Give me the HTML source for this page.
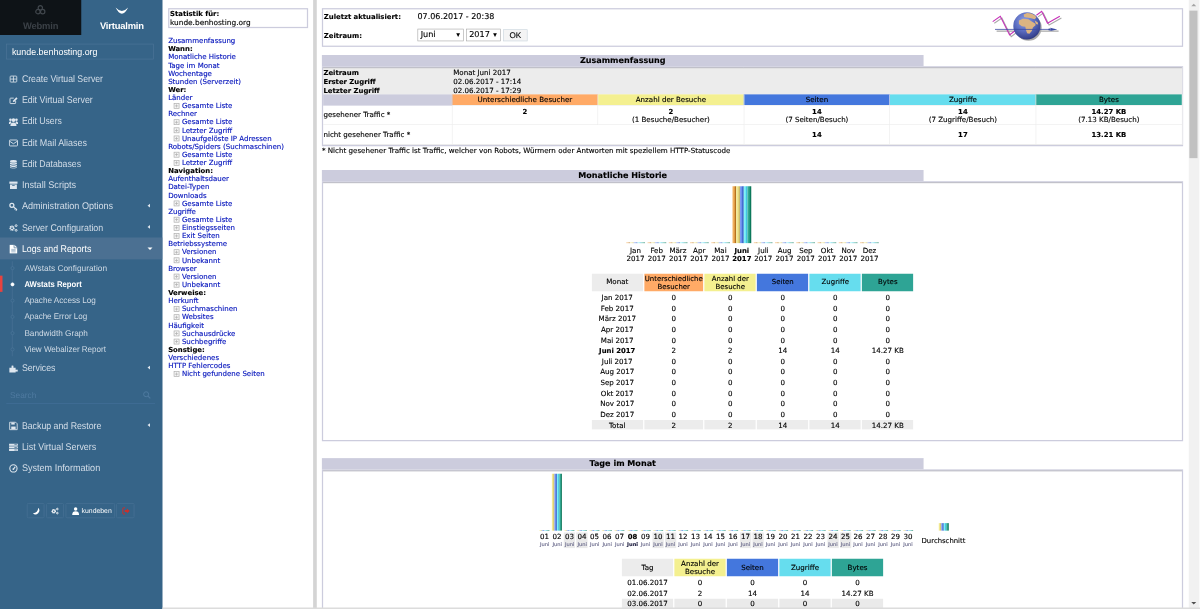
<!DOCTYPE html>
<html lang="de"><head><meta charset="utf-8"><title>AWstats Report - kunde.benhosting.org</title>
<style>
*{box-sizing:content-box}
html,body{margin:0;padding:0;background:#fff;overflow:hidden;width:1200px;height:609px}
#stage{position:absolute;left:0;top:0;width:1920px;height:975px;transform:scale(0.625);transform-origin:0 0;overflow:hidden;background:#fff;text-rendering:geometricPrecision}
/* ---------- sidebar ---------- */
#side{position:absolute;left:0;top:0;width:260px;height:975px;background:#366488;font-family:"Liberation Sans",sans-serif;color:#e4ebf2;overflow:hidden}
#tabW{position:absolute;left:0;top:0;width:130px;height:56px;background:#0e1317;color:#3b4147}
#tabV{position:absolute;left:130px;top:0;width:130px;height:56px;color:#fff}
.tablbl{position:absolute;left:0;width:130px;top:33px;text-align:center;font-weight:bold;font-size:15px;line-height:18px;letter-spacing:-0.3px}
.tabico{position:absolute;left:0;width:130px;top:6px;text-align:center;height:22px}
#dom{position:absolute;left:10px;top:70px;width:234px;height:23px;border:1px solid #4d7598;color:#fff;font-size:15px;line-height:23px}
#dom span{position:absolute;left:8px;top:1px;transform:scaleX(.95);transform-origin:0 50%}
.mi{position:absolute;left:0;width:260px;height:34px;line-height:38px;font-size:15.6px;color:#d3dde8;white-space:nowrap}
.mi .tx{position:absolute;left:35px;top:0;transform:scaleX(.92);transform-origin:0 50%}
.mi svg{position:absolute;left:13.5px;top:10.5px;width:15px;height:15px}
.mi .ar{position:absolute;left:236px;top:14px;width:0;height:0;border-top:3.5px solid transparent;border-bottom:3.5px solid transparent;border-right:4px solid #dfe7ef}
.mi .ad{position:absolute;left:235.500px;top:16px;width:0;height:0;border-left:4px solid transparent;border-right:4px solid transparent;border-top:4.500px solid #fff}
.mi.act{background:#4b7092;color:#fff;height:35px}
.si{position:absolute;left:0;width:260px;height:26px;line-height:26px;font-size:13.4px;color:#cfdae5;white-space:nowrap}
.si .tx{position:absolute;left:39px;top:0;transform:scaleX(.985);transform-origin:0 50%}
.si.on .tx{transform:scaleX(.94)}
.si .bu{position:absolute;left:17px;top:10px;width:4px;height:4px;border:1px solid #4f789c;border-radius:50%;background:#366488}
.si.on{color:#fff;font-weight:bold}
.si.on .bu{background:#fff;border-color:#fff}
#vline{position:absolute;left:19px;top:418px;width:1px;height:152px;background:#4a7295}
#redbar{position:absolute;left:0;top:441px;width:4px;height:26px;background:#e8433f}
#search{position:absolute;left:10px;top:621px;width:238px;height:24px;border-bottom:1px solid #44709a;font-size:13.3px;line-height:24px;color:#4f7aa0}
#search span{position:absolute;left:6px;top:0}
.bb{position:absolute;top:805px;height:22px;border:1px solid #4a7397;border-radius:2px;color:#fff;font-size:11px;line-height:22px}
/* ---------- awstats common ---------- */
.aw{font-family:"DejaVu Sans",Verdana,sans-serif;font-size:11px;line-height:13px;color:#000;-webkit-text-stroke:0.2px}
.aw a{color:#0011bb;text-decoration:none}
.aw b{font-weight:bold}
.aw table{border-collapse:separate;border-spacing:2px}
.aw td,.aw th{padding:1px;text-align:center;font-size:11.35px;line-height:13px}
.aw td b{font-size:11px}
.aw table.brd{border-collapse:collapse;border-spacing:0;width:100%}
.aw table.brd>tbody>tr>td{padding:2px;background:#ccccdd}
.aw td.ttl{font-size:12.9px;line-height:16px;font-weight:bold;background:#ccccdd;padding:2px 1px 0 !important;text-align:center}
.aw td.blk{font-size:13px;line-height:16px;background:#fff !important;padding:1px !important}
.aw table.dat{border-collapse:collapse;border-spacing:0;background:#fff;width:100%}
.aw table.dat>tbody>tr>td{padding:2px}
.aw table.sum>tbody>tr>td{border:1px solid #ececec;border-left-width:0;border-top-width:0}
.aw td.l{text-align:left}
.aw table.sum>tbody>tr>td.d{padding:3px 2px 1px}
.aw tr.r>td{padding:2px 1px 0}
/* nav frame */
#nav{position:absolute;left:261px;top:0;width:240px;height:975px;background:#fff;overflow:hidden}
#navin{position:absolute;left:8px;top:13px;width:224px}
#nav .ln{height:13px;white-space:nowrap}
#nav .ln a{font-size:11.25px}
#nav .sub{padding-left:9px}
#nav .ic{display:inline-block;width:7px;height:7px;border:1px solid #aaa;margin:0 4px 0 0;vertical-align:-1px;background:#f4f4f4;position:relative}
#nav .ic:before{content:"";position:absolute;left:1px;top:3px;width:5px;height:1px;background:#aaa}
#nav .ic:after{content:"";position:absolute;left:3px;top:1px;width:1px;height:5px;background:#aaa}
#fdiv{position:absolute;left:501px;top:0;width:6px;height:975px;background:#d4d4d4}
/* main frame */
#main{position:absolute;left:507px;top:0;width:1396px;height:975px;background:#fff;overflow:hidden}
#mainin{position:absolute;left:8px;top:13px;width:1378px}
#sb{position:absolute;left:1902px;top:0;width:17px;height:975px;background:#f1f1f1}
#sb .th{position:absolute;left:0.5px;top:17px;width:13px;height:236px;background:#c1c1c1}
#sb .up{position:absolute;left:4px;top:6px;width:0;height:0;border-left:4px solid transparent;border-right:4px solid transparent;border-bottom:4px solid #a3a3a3}
#sb .dn{position:absolute;left:4px;top:963px;width:0;height:0;border-left:4px solid transparent;border-right:4px solid transparent;border-top:4px solid #505050}
#botline{position:absolute;left:260px;top:972px;width:1660px;height:3px;background:#dcdcdc}
.sel{display:inline-block;vertical-align:middle;height:18px;border:1px solid #a9a9a9;background:#fff;font-size:13px;line-height:18px;text-align:left;position:relative;padding-left:4px}
.sel i{position:absolute;right:5px;top:6px;width:0;height:0;border-left:3.5px solid transparent;border-right:3.5px solid transparent;border-top:6px solid #000}
.btn{display:inline-block;vertical-align:middle;height:17px;border:1px solid #ccd7e0;background:#f4f4f4;font-family:"Liberation Sans",sans-serif;font-size:13px;line-height:17px;padding:0 9px;margin-left:1px}
.bar{display:inline-block;vertical-align:bottom}
.dn{line-height:13px}
.dm{font-size:8.2px;line-height:10px;color:#666688}
.bu{background:linear-gradient(90deg,#f2b666 0%,#eeaa55 45%,#b5711f 78%,#a86818 100%)}
.bv{background:linear-gradient(90deg,#f5ee9a 0%,#efe48a 45%,#cfc070 78%,#c4b566 100%)}
.bp{background:linear-gradient(90deg,#86a4f4 0%,#6a8cea 45%,#2f5cc8 78%,#2450b8 100%)}
.bh{background:linear-gradient(90deg,#8cf6fa 0%,#70ecf4 45%,#3cbce0 78%,#30b0d8 100%)}
.bk{background:linear-gradient(90deg,#3cb49c 0%,#2ea48e 45%,#0c7a5c 78%,#066a4e 100%)}
</style></head><body>
<div id="stage">
<div id="side">
<div id="tabW"><div class="tabico"><svg width="22" height="22" viewBox="0 0 22 22"><g fill="none" stroke="#41474d" stroke-width="1.900"><circle cx="10.500" cy="6.500" r="3.500"/><circle cx="6.700" cy="12.600" r="3.500"/><circle cx="14.300" cy="12.600" r="3.500"/></g></svg></div><div class="tablbl">Webmin</div></div>
<div id="tabV"><div class="tabico"><svg width="30" height="22" viewBox="0 0 30 22"><path d="M5 6 Q15 17 25 6 Q15 26 5 6Z" fill="#fff"/></svg></div><div class="tablbl">Virtualmin</div></div>
<div id="dom"><span>kunde.benhosting.org</span></div>
<div class="mi" style="top:108px"><svg viewBox="0 0 15 15"><rect x="2.2" y="2.7" width="10.6" height="9.6" rx="1.2" fill="none" stroke="#dfe7ef" stroke-width="1.3"/><path d="M7.5 3v9M2.5 7.5h10" stroke="#dfe7ef" stroke-width="1.3"/></svg><span class="tx" style="transform:scaleX(0.893)">Create Virtual Server</span></div>
<div class="mi" style="top:142px"><svg viewBox="0 0 15 15"><path d="M11 8.5v3.2a1 1 0 0 1-1 1H3a1 1 0 0 1-1-1V5a1 1 0 0 1 1-1h5" fill="none" stroke="#dfe7ef" stroke-width="1.4"/><path d="M6.5 10.2l.6-2.6 5-5 2 2-5 5z" fill="#dfe7ef"/></svg><span class="tx" style="transform:scaleX(0.904)">Edit Virtual Server</span></div>
<div class="mi" style="top:176px"><svg viewBox="0 0 15 15"><circle cx="7.5" cy="5" r="3" fill="#dfe7ef"/><path d="M2.6 14.5c0-3.800 1.700-5.600 4.900-5.600s4.900 1.800 4.900 5.600z" fill="#dfe7ef"/><circle cx="2.700" cy="4.600" r="2.100" fill="#dfe7ef"/><circle cx="12.300" cy="4.600" r="2.100" fill="#dfe7ef"/><path d="M0 11.500c0-2.800 1-4.400 3.400-4.400l.8 1.600-1.600 2.800zM15 11.500c0-2.800-1-4.400-3.400-4.400l-.8 1.600 1.600 2.800z" fill="#dfe7ef"/></svg><span class="tx" style="transform:scaleX(0.891)">Edit Users</span></div>
<div class="mi" style="top:210px"><svg viewBox="0 0 15 15"><rect x="1" y="3" width="13" height="9.500" rx="1.200" fill="none" stroke="#dfe7ef" stroke-width="1.400"/><path d="M1.500 5l6 4 6-4" fill="none" stroke="#dfe7ef" stroke-width="1.400"/></svg><span class="tx" style="transform:scaleX(0.917)">Edit Mail Aliases</span></div>
<div class="mi" style="top:244px"><svg viewBox="0 0 15 15"><ellipse cx="7.500" cy="3.200" rx="5.500" ry="2.200" fill="#dfe7ef"/><path d="M2 5c1 1.500 10 1.500 11 0v2.200c-1 1.600-10 1.600-11 0zM2 8.600c1 1.500 10 1.500 11 0v2.200c-1 1.600-10 1.600-11 0zM2 12.100c1 1.500 10 1.500 11 0v.8c-1 2-10 2-11 0z" fill="#dfe7ef"/></svg><span class="tx" style="transform:scaleX(0.895)">Edit Databases</span></div>
<div class="mi" style="top:278px"><svg viewBox="0 0 15 15"><rect x="1" y="1.500" width="13" height="3.500" fill="#dfe7ef"/><path d="M2 6h11v7.500H2z" fill="#dfe7ef"/><rect x="5.500" y="7" width="4" height="1.200" fill="#366488"/></svg><span class="tx" style="transform:scaleX(0.936)">Install Scripts</span></div>
<div class="mi" style="top:312px"><svg viewBox="0 0 15 15"><circle cx="5" cy="5.500" r="3.200" fill="none" stroke="#dfe7ef" stroke-width="2"/><path d="M7.200 7.600l6 5M10.600 10.300l-1.500 1.800M12.800 12.200l-1.500 1.800" stroke="#dfe7ef" stroke-width="1.800" fill="none"/></svg><span class="tx" style="transform:scaleX(0.931)">Administration Options</span><span class="ar"></span></div>
<div class="mi" style="top:346px"><svg viewBox="0 0 15 15"><circle cx="5.200" cy="8" r="3" fill="none" stroke="#dfe7ef" stroke-width="2.400" stroke-dasharray="1.700 0.700"/><circle cx="5.200" cy="8" r="2.300" fill="none" stroke="#dfe7ef" stroke-width="1.400"/><circle cx="11.800" cy="4" r="1.500" fill="none" stroke="#dfe7ef" stroke-width="1.600"/><circle cx="11.800" cy="11.500" r="1.500" fill="none" stroke="#dfe7ef" stroke-width="1.600"/></svg><span class="tx" style="transform:scaleX(0.910)">Server Configuration</span><span class="ar"></span></div>
<div class="mi act" style="top:380px"><svg viewBox="0 0 15 15"><path d="M1.500 0.500h7.500l4.500 4.500V14.500H1.500z" fill="#fff"/><path d="M8.500 0.500v5h5" fill="none" stroke="#4b7092" stroke-width="1.100"/><path d="M4 8h7M4 10h7M4 12h7" stroke="#6d8dab" stroke-width="0.900"/></svg><span class="tx" style="transform:scaleX(0.903)">Logs and Reports</span><span class="ad"></span></div>
<div class="mi" style="top:571px"><svg viewBox="0 0 15 15"><path d="M1 6.500h3.500V5a1.600 1.600 0 1 1 3 0v1.500H11v3h1.300a1.600 1.600 0 1 1 0 3H11V14H1z" fill="#dfe7ef"/></svg><span class="tx" style="transform:scaleX(0.899)">Services</span><span class="ar"></span></div>
<div class="mi" style="top:663px"><svg viewBox="0 0 15 15"><path d="M1.500 1.500h9.500l2.500 2.500v9.500h-12z" fill="none" stroke="#dfe7ef" stroke-width="1.400"/><rect x="4" y="2" width="5.500" height="3.300" fill="#dfe7ef"/><rect x="4" y="8.500" width="7" height="4.500" fill="#dfe7ef"/></svg><span class="tx" style="transform:scaleX(0.900)">Backup and Restore</span><span class="ar"></span></div>
<div class="mi" style="top:697px"><svg viewBox="0 0 15 15"><rect x="0.500" y="2" width="14" height="3.200" fill="#dfe7ef"/><rect x="0.500" y="6.200" width="14" height="3.200" fill="#dfe7ef"/><rect x="0.500" y="10.400" width="14" height="3.200" fill="#dfe7ef"/><rect x="9" y="3" width="4" height="1.100" fill="#366488"/><rect x="9" y="7.200" width="4" height="1.100" fill="#366488"/><rect x="9" y="11.400" width="4" height="1.100" fill="#366488"/></svg><span class="tx" style="transform:scaleX(0.910)">List Virtual Servers</span></div>
<div class="mi" style="top:731px"><svg viewBox="0 0 15 15"><circle cx="7.500" cy="7.500" r="5.800" fill="none" stroke="#dfe7ef" stroke-width="1.700"/><path d="M7.500 8.500L10.500 4.500" stroke="#dfe7ef" stroke-width="1.800"/><circle cx="7.300" cy="8.500" r="1.500" fill="#dfe7ef"/></svg><span class="tx" style="transform:scaleX(0.933)">System Information</span></div>
<div id="vline"></div><div id="redbar"></div>
<div class="si" style="top:416px"><span class="bu"></span><span class="tx" style="transform:scaleX(0.997)">AWstats Configuration</span></div>
<div class="si on" style="top:442px"><span class="bu"></span><span class="tx" style="transform:scaleX(0.920)">AWstats Report</span></div>
<div class="si" style="top:468px"><span class="bu"></span><span class="tx" style="transform:scaleX(0.973)">Apache Access Log</span></div>
<div class="si" style="top:494px"><span class="bu"></span><span class="tx" style="transform:scaleX(0.957)">Apache Error Log</span></div>
<div class="si" style="top:520px"><span class="bu"></span><span class="tx" style="transform:scaleX(0.982)">Bandwidth Graph</span></div>
<div class="si" style="top:546px"><span class="bu"></span><span class="tx" style="transform:scaleX(0.962)">View Webalizer Report</span></div>
<div id="search"><span>Search</span><svg style="position:absolute;right:6.500px;top:4px" width="14" height="14" viewBox="0 0 14 14"><circle cx="5.800" cy="5.800" r="4" fill="none" stroke="#4f7aa0" stroke-width="1.600"/><path d="M8.800 8.800l3.700 3.700" stroke="#4f7aa0" stroke-width="1.800"/></svg></div>
<div class="bb" style="left:43px;width:26px"><svg style="position:absolute;left:7px;top:4.500px" width="13" height="13" viewBox="0 0 13 13"><path d="M10 1.500A6 6 0 1 1 1.500 10A7.800 7.800 0 0 0 10 1.500z" fill="#fff"/></svg></div>
<div class="bb" style="left:74px;width:26px"><svg style="position:absolute;left:6px;top:4.500px" width="14" height="13" viewBox="0 0 15 15"><circle cx="5.200" cy="8" r="3" fill="none" stroke="#fff" stroke-width="2.400" stroke-dasharray="1.700 0.700"/><circle cx="5.200" cy="8" r="2.300" fill="none" stroke="#fff" stroke-width="1.400"/><circle cx="11.800" cy="4" r="1.500" fill="none" stroke="#fff" stroke-width="1.600"/><circle cx="11.800" cy="11.500" r="1.500" fill="none" stroke="#fff" stroke-width="1.600"/></svg></div>
<div class="bb" style="left:104.500px;width:77px"><svg style="position:absolute;left:9px;top:4.500px" width="12" height="13" viewBox="0 0 12 13"><circle cx="6" cy="3.200" r="2.800" fill="#fff"/><path d="M0.500 13c0-4.500 2-6 5.500-6s5.500 1.500 5.500 6z" fill="#fff"/></svg><span style="position:absolute;left:25px;top:0">kundeben</span></div>
<div class="bb" style="left:186px;width:27px"><svg style="position:absolute;left:8px;top:4.500px" width="13" height="13" viewBox="0 0 13 13"><path d="M5 1.500H2.500a1 1 0 0 0-1 1v8a1 1 0 0 0 1 1H5" fill="none" stroke="#c9302c" stroke-width="1.600"/><path d="M4.500 5h3.500V2.500l4.500 4-4.500 4V8H4.500z" fill="#c9302c"/></svg></div>
</div>
<div id="nav" class="aw"><div id="navin">
<table class="brd"><tr><td><table class="dat" style="border-spacing:0"><tr><td class="l" style="padding:1px 1px 0"><b>Statistik für:</b><br><span style="font-size:11.800px;line-height:14px">kunde.benhosting.org</span></td></tr></table></td></tr></table>
<div style="height:14px"></div>
<div class="ln"><a>Zusammenfassung</a></div>
<div class="ln"><b>Wann:</b></div>
<div class="ln"><a>Monatliche Historie</a></div>
<div class="ln"><a>Tage im Monat</a></div>
<div class="ln"><a>Wochentage</a></div>
<div class="ln"><a>Stunden (Serverzeit)</a></div>
<div class="ln"><b>Wer:</b></div>
<div class="ln"><a>Länder</a></div>
<div class="ln sub"><span class="ic"></span><a>Gesamte Liste</a></div>
<div class="ln"><a>Rechner</a></div>
<div class="ln sub"><span class="ic"></span><a>Gesamte Liste</a></div>
<div class="ln sub"><span class="ic"></span><a>Letzter Zugriff</a></div>
<div class="ln sub"><span class="ic"></span><a>Unaufgelöste IP Adressen</a></div>
<div class="ln"><a>Robots/Spiders (Suchmaschinen)</a></div>
<div class="ln sub"><span class="ic"></span><a>Gesamte Liste</a></div>
<div class="ln sub"><span class="ic"></span><a>Letzter Zugriff</a></div>
<div class="ln"><b>Navigation:</b></div>
<div class="ln"><a>Aufenthaltsdauer</a></div>
<div class="ln"><a>Datei-Typen</a></div>
<div class="ln"><a>Downloads</a></div>
<div class="ln sub"><span class="ic"></span><a>Gesamte Liste</a></div>
<div class="ln"><a>Zugriffe</a></div>
<div class="ln sub"><span class="ic"></span><a>Gesamte Liste</a></div>
<div class="ln sub"><span class="ic"></span><a>Einstiegsseiten</a></div>
<div class="ln sub"><span class="ic"></span><a>Exit Seiten</a></div>
<div class="ln"><a>Betriebssysteme</a></div>
<div class="ln sub"><span class="ic"></span><a>Versionen</a></div>
<div class="ln sub"><span class="ic"></span><a>Unbekannt</a></div>
<div class="ln"><a>Browser</a></div>
<div class="ln sub"><span class="ic"></span><a>Versionen</a></div>
<div class="ln sub"><span class="ic"></span><a>Unbekannt</a></div>
<div class="ln"><b>Verweise:</b></div>
<div class="ln"><a>Herkunft</a></div>
<div class="ln sub"><span class="ic"></span><a>Suchmaschinen</a></div>
<div class="ln sub"><span class="ic"></span><a>Websites</a></div>
<div class="ln"><a>Häufigkeit</a></div>
<div class="ln sub"><span class="ic"></span><a>Suchausdrücke</a></div>
<div class="ln sub"><span class="ic"></span><a>Suchbegriffe</a></div>
<div class="ln"><b>Sonstige:</b></div>
<div class="ln"><a>Verschiedenes</a></div>
<div class="ln"><a>HTTP Fehlercodes</a></div>
<div class="ln sub"><span class="ic"></span><a>Nicht gefundene Seiten</a></div>
</div></div>
<div id="fdiv"></div>
<div id="main" class="aw"><div id="mainin">
<table class="brd"><tr><td><table class="dat" style="border-spacing:0"><tr><td class="l" style="width:148px;height:23px;padding:1px"><b>Zuletzt aktualisiert:</b>&nbsp;</td><td class="l" style="padding:1px"><span style="font-size:12.8px">07.06.2017 - 20:38</span></td><td rowspan="2" style="text-align:right;padding:1px;width:500px">&nbsp;</td></tr><tr><td class="l" style="height:30.5px;padding:1px"><b>Zeitraum:</b></td><td class="l" style="padding:1px"><span class="sel" style="width:68px">Juni<i></i></span> <span class="sel" style="width:49px">2017<i></i></span> <span class="btn">OK</span></td></tr></table></td></tr></table>
<div style="height:13.5px"></div>
<table class="brd"><tr><td class="ttl" style="width:69.86%">Zusammenfassung </td><td class="blk">&nbsp;</td></tr>
<tr><td colspan="2"><table class="dat sum" style="border-top:1px solid #9c9ca6;background:linear-gradient(#ececec 0,#ececec 42px,#fff 42px)"><tr><td class="l" style="padding:0.5px 2px 0 0.5px;border:0"><b>Zeitraum</b></td><td class="l" colspan="5" style="padding:0.5px 2px 0;border:0">Monat Juni 2017</td></tr><tr><td class="l" style="padding:1px 2px 0 0.5px;border:0"><b>Erster Zugriff</b></td><td class="l" colspan="5" style="padding:1px 2px 0;border:0">02.06.2017 - 17:14</td></tr><tr><td class="l" style="padding:1px 2px 0 0.5px;border:0"><b>Letzter Zugriff</b></td><td class="l" colspan="5" style="padding:1px 2px 0;border:0">02.06.2017 - 17:29</td></tr><tr><td style="background:#ccccdd;border-color:#ccccdd">&nbsp;</td><td style="width:17%;background:#ffaa66;border-color:#ececec;padding:1px 2px">Unterschiedliche Besucher</td><td style="width:17%;background:#f4f090;border-color:#ececec;padding:1px 2px">Anzahl der Besuche</td><td style="width:17%;background:#4477dd;border-color:#ececec;padding:1px 2px">Seiten</td><td style="width:17%;background:#66ddee;border-color:#ececec;padding:1px 2px">Zugriffe</td><td style="width:17%;background:#2ea495;border-color:#ececec;padding:1px 2px">Bytes</td></tr><tr><td class="l" style="height:26px;padding-left:0.5px">gesehener Traffic *&nbsp;</td><td class="d" style="vertical-align:top"><b>2</b><br>&nbsp;</td><td class="d"><b>2</b><br>(1&nbsp;Besuche/Besucher)</td><td class="d"><b>14</b><br>(7&nbsp;Seiten/Besuch)</td><td class="d"><b>14</b><br>(7&nbsp;Zugriffe/Besuch)</td><td class="d"><b>14.27 KB</b><br>(7.13 KB/Besuch)</td></tr><tr><td class="l" style="height:27px;padding-left:0.5px">nicht gesehener Traffic *&nbsp;</td><td colspan="2">&nbsp;</td><td><b>14</b></td><td><b>17</b></td><td><b>13.21 KB</b></td></tr></table></td></tr></table>
<div class="l" style="height:13px;margin-top:1px;white-space:nowrap"><span style="font-size:11.4px">* Nicht gesehener Traffic ist Traffic, welcher von Robots, Würmern oder Antworten mit speziellem HTTP-Statuscode</span></div>
<div style="height:24.5px"></div>
<table class="brd"><tr><td class="ttl" style="width:69.86%">Monatliche Historie </td><td class="blk">&nbsp;</td></tr>
<tr><td colspan="2"><table class="dat" style="border-top:1px solid #9c9ca6"><tr><td style="padding:2px"><center><table><tr style="vertical-align:bottom"><td style="vertical-align:bottom;line-height:0;white-space:nowrap;opacity:0.9"><span class="bar bu" style="width:6px;height:1px"></span><span class="bar bv" style="width:6px;height:1px"></span><span class="bar bp" style="width:6px;height:1px"></span><span class="bar bh" style="width:6px;height:1px"></span><span class="bar bk" style="width:6px;height:1px"></span></td><td style="vertical-align:bottom;line-height:0;white-space:nowrap;opacity:0.9"><span class="bar bu" style="width:6px;height:1px"></span><span class="bar bv" style="width:6px;height:1px"></span><span class="bar bp" style="width:6px;height:1px"></span><span class="bar bh" style="width:6px;height:1px"></span><span class="bar bk" style="width:6px;height:1px"></span></td><td style="vertical-align:bottom;line-height:0;white-space:nowrap;opacity:0.9"><span class="bar bu" style="width:6px;height:1px"></span><span class="bar bv" style="width:6px;height:1px"></span><span class="bar bp" style="width:6px;height:1px"></span><span class="bar bh" style="width:6px;height:1px"></span><span class="bar bk" style="width:6px;height:1px"></span></td><td style="vertical-align:bottom;line-height:0;white-space:nowrap;opacity:0.9"><span class="bar bu" style="width:6px;height:1px"></span><span class="bar bv" style="width:6px;height:1px"></span><span class="bar bp" style="width:6px;height:1px"></span><span class="bar bh" style="width:6px;height:1px"></span><span class="bar bk" style="width:6px;height:1px"></span></td><td style="vertical-align:bottom;line-height:0;white-space:nowrap;opacity:0.9"><span class="bar bu" style="width:6px;height:1px"></span><span class="bar bv" style="width:6px;height:1px"></span><span class="bar bp" style="width:6px;height:1px"></span><span class="bar bh" style="width:6px;height:1px"></span><span class="bar bk" style="width:6px;height:1px"></span></td><td style="vertical-align:bottom;line-height:0;white-space:nowrap;opacity:1"><span class="bar bu" style="width:6px;height:91px"></span><span class="bar bv" style="width:6px;height:91px"></span><span class="bar bp" style="width:6px;height:91px"></span><span class="bar bh" style="width:6px;height:91px"></span><span class="bar bk" style="width:6px;height:91px"></span></td><td style="vertical-align:bottom;line-height:0;white-space:nowrap;opacity:0.9"><span class="bar bu" style="width:6px;height:1px"></span><span class="bar bv" style="width:6px;height:1px"></span><span class="bar bp" style="width:6px;height:1px"></span><span class="bar bh" style="width:6px;height:1px"></span><span class="bar bk" style="width:6px;height:1px"></span></td><td style="vertical-align:bottom;line-height:0;white-space:nowrap;opacity:0.9"><span class="bar bu" style="width:6px;height:1px"></span><span class="bar bv" style="width:6px;height:1px"></span><span class="bar bp" style="width:6px;height:1px"></span><span class="bar bh" style="width:6px;height:1px"></span><span class="bar bk" style="width:6px;height:1px"></span></td><td style="vertical-align:bottom;line-height:0;white-space:nowrap;opacity:0.9"><span class="bar bu" style="width:6px;height:1px"></span><span class="bar bv" style="width:6px;height:1px"></span><span class="bar bp" style="width:6px;height:1px"></span><span class="bar bh" style="width:6px;height:1px"></span><span class="bar bk" style="width:6px;height:1px"></span></td><td style="vertical-align:bottom;line-height:0;white-space:nowrap;opacity:0.9"><span class="bar bu" style="width:6px;height:1px"></span><span class="bar bv" style="width:6px;height:1px"></span><span class="bar bp" style="width:6px;height:1px"></span><span class="bar bh" style="width:6px;height:1px"></span><span class="bar bk" style="width:6px;height:1px"></span></td><td style="vertical-align:bottom;line-height:0;white-space:nowrap;opacity:0.9"><span class="bar bu" style="width:6px;height:1px"></span><span class="bar bv" style="width:6px;height:1px"></span><span class="bar bp" style="width:6px;height:1px"></span><span class="bar bh" style="width:6px;height:1px"></span><span class="bar bk" style="width:6px;height:1px"></span></td><td style="vertical-align:bottom;line-height:0;white-space:nowrap;opacity:0.9"><span class="bar bu" style="width:6px;height:1px"></span><span class="bar bv" style="width:6px;height:1px"></span><span class="bar bp" style="width:6px;height:1px"></span><span class="bar bh" style="width:6px;height:1px"></span><span class="bar bk" style="width:6px;height:1px"></span></td></tr><tr style="vertical-align:middle"><td style="padding-top:2px">Jan<br>2017</td><td style="padding-top:2px">Feb<br>2017</td><td style="padding-top:2px">März<br>2017</td><td style="padding-top:2px">Apr<br>2017</td><td style="padding-top:2px">Mai<br>2017</td><td style="padding-top:2px"><b>Juni<br>2017</b></td><td style="padding-top:2px">Juli<br>2017</td><td style="padding-top:2px">Aug<br>2017</td><td style="padding-top:2px">Sep<br>2017</td><td style="padding-top:2px">Okt<br>2017</td><td style="padding-top:2px">Nov<br>2017</td><td style="padding-top:2px">Dez<br>2017</td></tr></table><div style="height:12.5px"></div><table><tr><td style="width:80px;background:#ececec;height:26px">Monat</td><td style="width:80px;background:#ffaa66;font-size:11.1px">Unterschiedliche Besucher</td><td style="width:80px;background:#f4f090;font-size:11.1px">Anzahl der Besuche</td><td style="width:80px;background:#4477dd;font-size:11.1px">Seiten</td><td style="width:80px;background:#66ddee;font-size:11.1px">Zugriffe</td><td style="width:80px;background:#2ea495;font-size:11.1px">Bytes</td></tr><tr class="r"><td>Jan 2017</td><td>0</td><td>0</td><td>0</td><td>0</td><td>0</td></tr><tr class="r"><td>Feb 2017</td><td>0</td><td>0</td><td>0</td><td>0</td><td>0</td></tr><tr class="r"><td>März 2017</td><td>0</td><td>0</td><td>0</td><td>0</td><td>0</td></tr><tr class="r"><td>Apr 2017</td><td>0</td><td>0</td><td>0</td><td>0</td><td>0</td></tr><tr class="r"><td>Mai 2017</td><td>0</td><td>0</td><td>0</td><td>0</td><td>0</td></tr><tr class="r"><td><b>Juni 2017</b></td><td>2</td><td>2</td><td>14</td><td>14</td><td>14.27 KB</td></tr><tr class="r"><td>Juli 2017</td><td>0</td><td>0</td><td>0</td><td>0</td><td>0</td></tr><tr class="r"><td>Aug 2017</td><td>0</td><td>0</td><td>0</td><td>0</td><td>0</td></tr><tr class="r"><td>Sep 2017</td><td>0</td><td>0</td><td>0</td><td>0</td><td>0</td></tr><tr class="r"><td>Okt 2017</td><td>0</td><td>0</td><td>0</td><td>0</td><td>0</td></tr><tr class="r"><td>Nov 2017</td><td>0</td><td>0</td><td>0</td><td>0</td><td>0</td></tr><tr class="r"><td>Dez 2017</td><td>0</td><td>0</td><td>0</td><td>0</td><td>0</td></tr><tr class="r"><td style="background:#ececec">Total</td><td style="background:#ececec">2</td><td style="background:#ececec">2</td><td style="background:#ececec">14</td><td style="background:#ececec">14</td><td style="background:#ececec">14.27 KB</td></tr></table><div style="height:13.5px"></div></center></td></tr></table></td></tr></table>
<div style="height:27px"></div>
<table class="brd"><tr><td class="ttl" style="width:69.86%">Tage im Monat </td><td class="blk">&nbsp;</td></tr>
<tr><td colspan="2"><table class="dat" style="border-top:1px solid #9c9ca6"><tr><td style="padding:2px"><center><table style="margin-top:-1px"><tr style="vertical-align:bottom"><td style="vertical-align:bottom;line-height:0;white-space:nowrap;opacity:0.9"><span class="bar bv" style="width:4px;height:1px"></span><span class="bar bp" style="width:4px;height:1px"></span><span class="bar bh" style="width:4px;height:1px"></span><span class="bar bk" style="width:4px;height:1px"></span></td><td style="vertical-align:bottom;line-height:0;white-space:nowrap;opacity:1"><span class="bar bv" style="width:4px;height:91px"></span><span class="bar bp" style="width:4px;height:91px"></span><span class="bar bh" style="width:4px;height:91px"></span><span class="bar bk" style="width:4px;height:91px"></span></td><td style="vertical-align:bottom;line-height:0;white-space:nowrap;opacity:0.9"><span class="bar bv" style="width:4px;height:1px"></span><span class="bar bp" style="width:4px;height:1px"></span><span class="bar bh" style="width:4px;height:1px"></span><span class="bar bk" style="width:4px;height:1px"></span></td><td style="vertical-align:bottom;line-height:0;white-space:nowrap;opacity:0.9"><span class="bar bv" style="width:4px;height:1px"></span><span class="bar bp" style="width:4px;height:1px"></span><span class="bar bh" style="width:4px;height:1px"></span><span class="bar bk" style="width:4px;height:1px"></span></td><td style="vertical-align:bottom;line-height:0;white-space:nowrap;opacity:0.9"><span class="bar bv" style="width:4px;height:1px"></span><span class="bar bp" style="width:4px;height:1px"></span><span class="bar bh" style="width:4px;height:1px"></span><span class="bar bk" style="width:4px;height:1px"></span></td><td style="vertical-align:bottom;line-height:0;white-space:nowrap;opacity:0.9"><span class="bar bv" style="width:4px;height:1px"></span><span class="bar bp" style="width:4px;height:1px"></span><span class="bar bh" style="width:4px;height:1px"></span><span class="bar bk" style="width:4px;height:1px"></span></td><td style="vertical-align:bottom;line-height:0;white-space:nowrap;opacity:0.9"><span class="bar bv" style="width:4px;height:1px"></span><span class="bar bp" style="width:4px;height:1px"></span><span class="bar bh" style="width:4px;height:1px"></span><span class="bar bk" style="width:4px;height:1px"></span></td><td style="vertical-align:bottom;line-height:0;white-space:nowrap;opacity:0.9"><span class="bar bv" style="width:4px;height:1px"></span><span class="bar bp" style="width:4px;height:1px"></span><span class="bar bh" style="width:4px;height:1px"></span><span class="bar bk" style="width:4px;height:1px"></span></td><td style="vertical-align:bottom;line-height:0;white-space:nowrap;opacity:0.9"><span class="bar bv" style="width:4px;height:1px"></span><span class="bar bp" style="width:4px;height:1px"></span><span class="bar bh" style="width:4px;height:1px"></span><span class="bar bk" style="width:4px;height:1px"></span></td><td style="vertical-align:bottom;line-height:0;white-space:nowrap;opacity:0.9"><span class="bar bv" style="width:4px;height:1px"></span><span class="bar bp" style="width:4px;height:1px"></span><span class="bar bh" style="width:4px;height:1px"></span><span class="bar bk" style="width:4px;height:1px"></span></td><td style="vertical-align:bottom;line-height:0;white-space:nowrap;opacity:0.9"><span class="bar bv" style="width:4px;height:1px"></span><span class="bar bp" style="width:4px;height:1px"></span><span class="bar bh" style="width:4px;height:1px"></span><span class="bar bk" style="width:4px;height:1px"></span></td><td style="vertical-align:bottom;line-height:0;white-space:nowrap;opacity:0.9"><span class="bar bv" style="width:4px;height:1px"></span><span class="bar bp" style="width:4px;height:1px"></span><span class="bar bh" style="width:4px;height:1px"></span><span class="bar bk" style="width:4px;height:1px"></span></td><td style="vertical-align:bottom;line-height:0;white-space:nowrap;opacity:0.9"><span class="bar bv" style="width:4px;height:1px"></span><span class="bar bp" style="width:4px;height:1px"></span><span class="bar bh" style="width:4px;height:1px"></span><span class="bar bk" style="width:4px;height:1px"></span></td><td style="vertical-align:bottom;line-height:0;white-space:nowrap;opacity:0.9"><span class="bar bv" style="width:4px;height:1px"></span><span class="bar bp" style="width:4px;height:1px"></span><span class="bar bh" style="width:4px;height:1px"></span><span class="bar bk" style="width:4px;height:1px"></span></td><td style="vertical-align:bottom;line-height:0;white-space:nowrap;opacity:0.9"><span class="bar bv" style="width:4px;height:1px"></span><span class="bar bp" style="width:4px;height:1px"></span><span class="bar bh" style="width:4px;height:1px"></span><span class="bar bk" style="width:4px;height:1px"></span></td><td style="vertical-align:bottom;line-height:0;white-space:nowrap;opacity:0.9"><span class="bar bv" style="width:4px;height:1px"></span><span class="bar bp" style="width:4px;height:1px"></span><span class="bar bh" style="width:4px;height:1px"></span><span class="bar bk" style="width:4px;height:1px"></span></td><td style="vertical-align:bottom;line-height:0;white-space:nowrap;opacity:0.9"><span class="bar bv" style="width:4px;height:1px"></span><span class="bar bp" style="width:4px;height:1px"></span><span class="bar bh" style="width:4px;height:1px"></span><span class="bar bk" style="width:4px;height:1px"></span></td><td style="vertical-align:bottom;line-height:0;white-space:nowrap;opacity:0.9"><span class="bar bv" style="width:4px;height:1px"></span><span class="bar bp" style="width:4px;height:1px"></span><span class="bar bh" style="width:4px;height:1px"></span><span class="bar bk" style="width:4px;height:1px"></span></td><td style="vertical-align:bottom;line-height:0;white-space:nowrap;opacity:0.9"><span class="bar bv" style="width:4px;height:1px"></span><span class="bar bp" style="width:4px;height:1px"></span><span class="bar bh" style="width:4px;height:1px"></span><span class="bar bk" style="width:4px;height:1px"></span></td><td style="vertical-align:bottom;line-height:0;white-space:nowrap;opacity:0.9"><span class="bar bv" style="width:4px;height:1px"></span><span class="bar bp" style="width:4px;height:1px"></span><span class="bar bh" style="width:4px;height:1px"></span><span class="bar bk" style="width:4px;height:1px"></span></td><td style="vertical-align:bottom;line-height:0;white-space:nowrap;opacity:0.9"><span class="bar bv" style="width:4px;height:1px"></span><span class="bar bp" style="width:4px;height:1px"></span><span class="bar bh" style="width:4px;height:1px"></span><span class="bar bk" style="width:4px;height:1px"></span></td><td style="vertical-align:bottom;line-height:0;white-space:nowrap;opacity:0.9"><span class="bar bv" style="width:4px;height:1px"></span><span class="bar bp" style="width:4px;height:1px"></span><span class="bar bh" style="width:4px;height:1px"></span><span class="bar bk" style="width:4px;height:1px"></span></td><td style="vertical-align:bottom;line-height:0;white-space:nowrap;opacity:0.9"><span class="bar bv" style="width:4px;height:1px"></span><span class="bar bp" style="width:4px;height:1px"></span><span class="bar bh" style="width:4px;height:1px"></span><span class="bar bk" style="width:4px;height:1px"></span></td><td style="vertical-align:bottom;line-height:0;white-space:nowrap;opacity:0.9"><span class="bar bv" style="width:4px;height:1px"></span><span class="bar bp" style="width:4px;height:1px"></span><span class="bar bh" style="width:4px;height:1px"></span><span class="bar bk" style="width:4px;height:1px"></span></td><td style="vertical-align:bottom;line-height:0;white-space:nowrap;opacity:0.9"><span class="bar bv" style="width:4px;height:1px"></span><span class="bar bp" style="width:4px;height:1px"></span><span class="bar bh" style="width:4px;height:1px"></span><span class="bar bk" style="width:4px;height:1px"></span></td><td style="vertical-align:bottom;line-height:0;white-space:nowrap;opacity:0.9"><span class="bar bv" style="width:4px;height:1px"></span><span class="bar bp" style="width:4px;height:1px"></span><span class="bar bh" style="width:4px;height:1px"></span><span class="bar bk" style="width:4px;height:1px"></span></td><td style="vertical-align:bottom;line-height:0;white-space:nowrap;opacity:0.9"><span class="bar bv" style="width:4px;height:1px"></span><span class="bar bp" style="width:4px;height:1px"></span><span class="bar bh" style="width:4px;height:1px"></span><span class="bar bk" style="width:4px;height:1px"></span></td><td style="vertical-align:bottom;line-height:0;white-space:nowrap;opacity:0.9"><span class="bar bv" style="width:4px;height:1px"></span><span class="bar bp" style="width:4px;height:1px"></span><span class="bar bh" style="width:4px;height:1px"></span><span class="bar bk" style="width:4px;height:1px"></span></td><td style="vertical-align:bottom;line-height:0;white-space:nowrap;opacity:0.9"><span class="bar bv" style="width:4px;height:1px"></span><span class="bar bp" style="width:4px;height:1px"></span><span class="bar bh" style="width:4px;height:1px"></span><span class="bar bk" style="width:4px;height:1px"></span></td><td style="vertical-align:bottom;line-height:0;white-space:nowrap;opacity:0.9"><span class="bar bv" style="width:4px;height:1px"></span><span class="bar bp" style="width:4px;height:1px"></span><span class="bar bh" style="width:4px;height:1px"></span><span class="bar bk" style="width:4px;height:1px"></span></td><td style="padding:1px 2px">&nbsp;</td><td style="vertical-align:bottom;line-height:0;white-space:nowrap"><span class="bar bv" style="width:4px;height:12px"></span><span class="bar bp" style="width:4px;height:12px"></span><span class="bar bh" style="width:4px;height:12px"></span><span class="bar bk" style="width:4px;height:12px"></span></td></tr><tr style="vertical-align:middle"><td style=""><div class="dn">01</div><div class="dm">Juni</div></td><td style=""><div class="dn">02</div><div class="dm">Juni</div></td><td style="background:#eaeaea"><div class="dn">03</div><div class="dm">Juni</div></td><td style="background:#eaeaea"><div class="dn">04</div><div class="dm">Juni</div></td><td style=""><div class="dn">05</div><div class="dm">Juni</div></td><td style=""><div class="dn">06</div><div class="dm">Juni</div></td><td style=""><div class="dn">07</div><div class="dm">Juni</div></td><td style=""><b><div class="dn">08</div><div class="dm" style="color:#222244">Juni</div></b></td><td style=""><div class="dn">09</div><div class="dm">Juni</div></td><td style="background:#eaeaea"><div class="dn">10</div><div class="dm">Juni</div></td><td style="background:#eaeaea"><div class="dn">11</div><div class="dm">Juni</div></td><td style=""><div class="dn">12</div><div class="dm">Juni</div></td><td style=""><div class="dn">13</div><div class="dm">Juni</div></td><td style=""><div class="dn">14</div><div class="dm">Juni</div></td><td style=""><div class="dn">15</div><div class="dm">Juni</div></td><td style=""><div class="dn">16</div><div class="dm">Juni</div></td><td style="background:#eaeaea"><div class="dn">17</div><div class="dm">Juni</div></td><td style="background:#eaeaea"><div class="dn">18</div><div class="dm">Juni</div></td><td style=""><div class="dn">19</div><div class="dm">Juni</div></td><td style=""><div class="dn">20</div><div class="dm">Juni</div></td><td style=""><div class="dn">21</div><div class="dm">Juni</div></td><td style=""><div class="dn">22</div><div class="dm">Juni</div></td><td style=""><div class="dn">23</div><div class="dm">Juni</div></td><td style="background:#eaeaea"><div class="dn">24</div><div class="dm">Juni</div></td><td style="background:#eaeaea"><div class="dn">25</div><div class="dm">Juni</div></td><td style=""><div class="dn">26</div><div class="dm">Juni</div></td><td style=""><div class="dn">27</div><div class="dm">Juni</div></td><td style=""><div class="dn">28</div><div class="dm">Juni</div></td><td style=""><div class="dn">29</div><div class="dm">Juni</div></td><td style=""><div class="dn">30</div><div class="dm">Juni</div></td><td>&nbsp;</td><td style="vertical-align:middle;font-size:11px">Durchschnitt</td></tr></table><div style="height:13px"></div><table><tr><td style="width:80px;background:#ececec;height:26px">Tag</td><td style="width:80px;background:#f4f090">Anzahl der Besuche</td><td style="width:80px;background:#4477dd">Seiten</td><td style="width:80px;background:#66ddee">Zugriffe</td><td style="width:80px;background:#2ea495">Bytes</td></tr><tr class="r" style=""><td>01.06.2017</td><td>0</td><td>0</td><td>0</td><td>0</td></tr><tr class="r" style=""><td>02.06.2017</td><td>2</td><td>14</td><td>14</td><td>14.27 KB</td></tr><tr class="r" style="background:#eaeaea"><td>03.06.2017</td><td>0</td><td>0</td><td>0</td><td>0</td></tr><tr class="r" style="background:#eaeaea"><td>04.06.2017</td><td>0</td><td>0</td><td>0</td><td>0</td></tr></table></center></td></tr></table></td></tr></table>
</div></div>
<svg style="position:absolute;left:1580px;top:14px" width="128" height="56" viewBox="987.5 8.75 80 35"><defs><radialGradient id="gl" cx="0.42" cy="0.32" r="0.75"><stop offset="0" stop-color="#8fa0e6"/><stop offset="0.5" stop-color="#5a6cc0"/><stop offset="0.85" stop-color="#384490"/><stop offset="1" stop-color="#232c66"/></radialGradient><filter id="bl" x="-20%" y="-20%" width="140%" height="140%"><feGaussianBlur stdDeviation="0.55"/></filter><clipPath id="gc"><circle cx="1026.9" cy="25.9" r="13.6"/></clipPath></defs><g filter="url(#bl)" opacity="0.5" transform="translate(1.6,1.7)" fill="none" stroke="#555" stroke-width="1.1"><polyline points="992.7,21.6 1000.3,16.3 1009.6,35 1016,30"/><polyline points="1036.4,15.2 1041.7,11.3 1047.5,23.3 1059.8,16.3"/><circle cx="1026.9" cy="25.9" r="13.2" fill="#555" stroke="none"/><path d="M995 29.4H1057"/></g><g fill="none" stroke="#c630b8" stroke-width="1.1" stroke-linejoin="miter"><polyline points="992.7,21.6 1000.3,16.3 1009.6,35 1016,30"/><polyline points="1036.4,15.2 1041.7,11.3 1047.5,23.3 1059.8,16.3"/></g><circle cx="1026.9" cy="25.9" r="13.6" fill="url(#gl)"/><g clip-path="url(#gc)" fill="#dcb482"><path d="M1018.9 20.4L1023 18.7L1028.3 19.3L1031.8 21.6L1034.7 23.3L1035.8 25.1L1032.9 27.4L1031.8 30.9L1029.4 33.8L1027.1 33.3L1025.9 29.8L1025.3 26.8L1021.8 26.3L1018.9 23.900z"/><path d="M1023.6 14.6L1027.1 13.1L1031.2 13.4L1034.7 15.2L1036.4 17.5L1034.7 19.3L1030 18.1L1026.5 17.5L1024.2 16.900z"/><path d="M1034.7 20.4L1037.6 22.2L1038.2 24.5L1035.8 23.900z"/></g><path d="M995 29.4H1052" stroke="#3a4aa2" stroke-width="0.8" fill="none"/><path d="M1057.4 29.4L1050 27.800L1051 29.4L1050 31z" fill="#3a4aa2"/><circle cx="1049.300" cy="29.4" r="1" fill="#3a4aa2"/></svg><div id="sb"><div class="up"></div><div class="th"></div><div class="dn"></div></div>
<div id="botline"></div>
</div>
</body></html>
